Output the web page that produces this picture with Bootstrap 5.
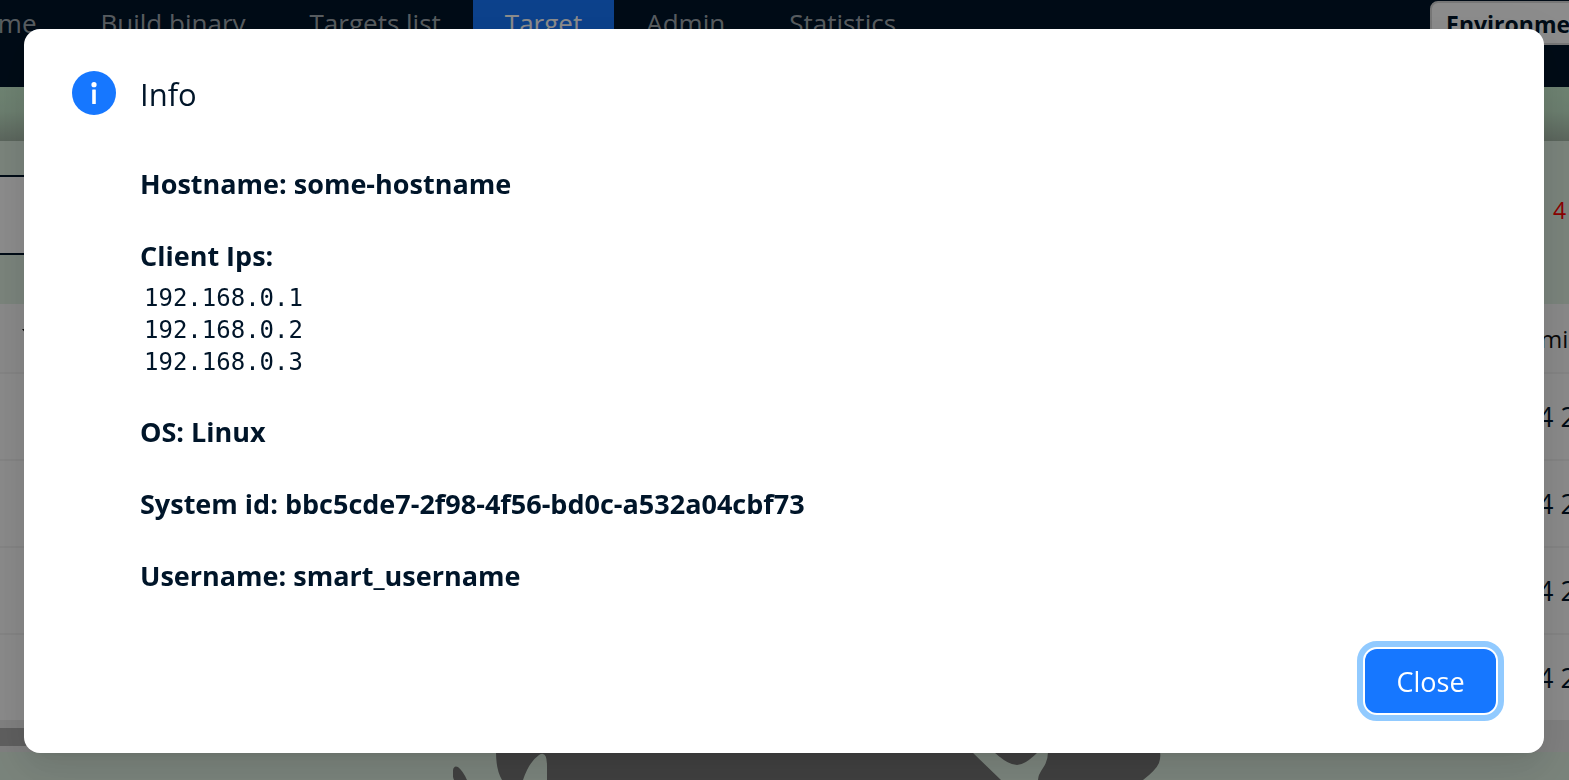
<!DOCTYPE html>
<html lang="en">
<head>
<meta charset="utf-8">
<meta name="viewport" content="width=device-width, initial-scale=1">
<title>Target info</title>
<link rel="stylesheet" href="https://cdn.jsdelivr.net/npm/bootstrap@5.3.0/dist/css/bootstrap.min.css">
<style>
:root { --ink: #001529; --brand: #1677ff; }
body { font-family: "Open Sans", "Noto Sans", sans-serif; font-size: 27px; line-height: 44px; color: var(--ink); background: #dff0e2; height: 100vh; overflow: hidden; }
.topbar { background: var(--ink); height: 87px; }
.topbar .nav { margin-left: -69px; }
.topbar .nav-link { color: rgba(255,255,255,.65); padding: 0 32px 40px; line-height: 47px; font-size: 26px; border-radius: 0; }
.topbar .nav-link.active { background: var(--brand); color: #fff; }
.env-btn { flex: none; width: 180px; margin: 1px -41px 0 0; height: 44px; border: 2px solid #d9d9d9; border-radius: 8px; background: #fff; color: var(--ink); font-size: 23px; font-weight: 700; line-height: 42px; padding: 0 14px; }
.strip { height: 54px; background: linear-gradient(#c9efd0, #c4e6ca 45%, #a6b9a9); }
.filters { height: 163px; padding-top: 34px; }
.filter-input { flex: 1; height: 80px; border: 2px solid var(--ink); border-width: 2px 0; border-radius: 0; background: #fff; }
.filter-count { width: 104px; padding-left: 88px; line-height: 70px; font-size: 23px; color: #f00; }
.targets { table-layout: fixed; margin: 0; color: var(--ink); --bs-table-bg: #fff; }
.targets th, .targets td { height: 87px; padding: 0; border-bottom: 2px solid #f0f0f0; white-space: nowrap; overflow: hidden; vertical-align: middle; color: var(--ink); background: #fcfcfc; }
.targets th { height: 69px; font-size: 24px; font-weight: 500; color: #111; background: #fafafa; }
.targets th:first-child { padding: 0 22px 12px; line-height: 20px; }
.targets th:last-child { padding: 2px 0 0 2px; }
.targets tr > :last-child { width: 31px; }
.targets tbody tr:last-child td { border-bottom: 0; height: 86px; }
.scroll-track { height: 32px; background: #e9e9e9; padding: 8px 0 6px; }
.scroll-thumb { height: 18px; width: 60%; background: #adadad; }
.art { padding-left: 44px; }
.art svg { flex: none; display: block; }
.modal { background: rgba(0,0,0,.45); }
.info-dialog { max-width: none; margin: 29px 25px 0 24px; }
.info-box { border: 0; border-radius: 16px; padding: 42px 48px 40px 48px; color: var(--ink); box-shadow: 0 12px 32px rgba(0,0,0,.08), 0 6px 12px -8px rgba(0,0,0,.12), 0 18px 56px 16px rgba(0,0,0,.05); }
.info-title { font-size: 31px; line-height: 46px; font-weight: 400; margin: 0; }
.info-body { padding: 45px 0 51px 68px; }
.info-body p { font-weight: 700; margin: 0 0 28px; }
.info-body p.ips-label { margin: 0; }
.info-body p:last-child { margin: 0; }
.ips { font-family: "DejaVu Sans Mono", monospace; font-size: 24px; line-height: 32px; margin: 4px 0 32px 4px; color: var(--ink); overflow: hidden; }
.close-btn, .close-btn:hover, .close-btn:focus { background: var(--brand); color: #fff; border: 0; border-radius: 12px; width: 131px; height: 64px; padding: 2px 0 0; font-size: 27px; line-height: 62px; outline: 6px solid #91caff; outline-offset: 2px; }
</style>
</head>
<body>
<header class="topbar d-flex justify-content-between overflow-hidden">
  <nav class="nav flex-nowrap text-nowrap">
    <a class="nav-link" href="#">Home</a>
    <a class="nav-link" href="#">Build binary</a>
    <a class="nav-link" href="#">Targets list</a>
    <a class="nav-link active" href="#" aria-current="page">Target</a>
    <a class="nav-link" href="#">Admin</a>
    <a class="nav-link" href="#">Statistics</a>
  </nav>
  <button type="button" class="env-btn text-start text-nowrap overflow-hidden">Environment</button>
</header>
<main>
  <div class="strip"></div>
  <div class="filters d-flex">
    <input class="filter-input" type="text" aria-label="Filter">
    <div class="filter-count">4</div>
  </div>
  <table class="table targets">
    <thead><tr><th><svg width="20" height="12" viewBox="0 0 20 12" aria-hidden="true"><path d="M0 0H20L10 12Z" fill="#111"/></svg></th><th>mi</th></tr></thead>
    <tbody>
      <tr><td></td><td>4 2</td></tr>
      <tr><td></td><td>4 2</td></tr>
      <tr><td></td><td>4 2</td></tr>
      <tr><td></td><td>4 2</td></tr>
    </tbody>
  </table>
  <div class="scroll-track"><div class="scroll-thumb"></div></div>
  <div class="art d-flex justify-content-center">
    <svg width="708" height="28" viewBox="453 752 708 28" fill="#757575" aria-hidden="true">
      <path d="M453 770Q454 765 458 767Q463 771 467 780H454Q452 775 453 770Z"/>
      <path d="M496 752Q496 770 502 780H523Q529 762 539 755Q547 750 547 766V780H1001L972 752Z"/>
      <path d="M994 752Q1008 765 1017 765Q1025 765 1038 752Z"/>
      <path d="M1048 752Q1048 761 1043 768Q1038 775 1038 780H1143Q1156 770 1159 763Q1161 757 1160 752Z"/>
    </svg>
  </div>
</main>

<div class="modal d-block" role="dialog" aria-modal="true" aria-labelledby="infoTitle">
  <div class="modal-dialog info-dialog">
    <div class="modal-content info-box">
      <div class="d-flex gap-4">
        <svg class="flex-shrink-0" width="44" height="44" viewBox="0 0 44 44" aria-hidden="true">
          <circle cx="22" cy="22" r="22" fill="#1677ff"/>
          <circle cx="22" cy="13.7" r="2.6" fill="#fff"/>
          <rect x="20.2" y="18.5" width="3.6" height="14.5" rx=".5" fill="#fff"/>
        </svg>
        <h1 class="info-title" id="infoTitle">Info</h1>
      </div>
      <div class="info-body">
        <p>Hostname: some-hostname</p>
        <p class="ips-label">Client Ips:</p>
        <pre class="ips">192.168.0.1
192.168.0.2
192.168.0.3</pre>
        <p>OS: Linux</p>
        <p>System id: bbc5cde7-2f98-4f56-bd0c-a532a04cbf73</p>
        <p>Username: smart_username</p>
      </div>
      <div class="d-flex justify-content-end">
        <button type="button" class="btn close-btn">Close</button>
      </div>
    </div>
  </div>
</div>
<script src="https://cdn.jsdelivr.net/npm/bootstrap@5.3.0/dist/js/bootstrap.bundle.min.js"></script>
</body>
</html>
